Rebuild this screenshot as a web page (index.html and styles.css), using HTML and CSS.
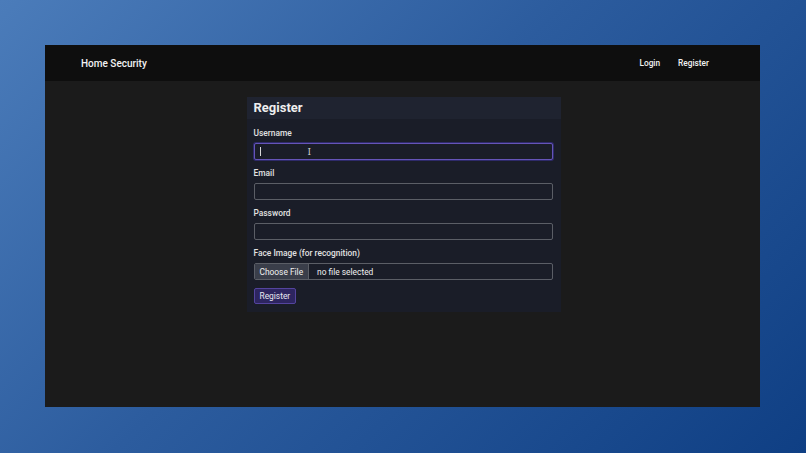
FILE: index.html
```html
<!DOCTYPE html>
<html lang="en">
<head>
  <meta charset="UTF-8" />
  <meta name="viewport" content="width=device-width, initial-scale=1.0"/>
  <title>Register - Home Security</title>
  <link rel="stylesheet" href="styles.css">
</head>
<body>
  <div class="window">
    <nav class="navbar">
      <a class="brand" href="#">Home Security</a>
      <div class="nav-links">
        <a href="#">Login</a>
        <a href="#">Register</a>
      </div>
    </nav>

    <main class="content">
      <div class="card">
        <div class="card-header">Register</div>
        <form class="card-body">
          <label for="username">Username</label>
          <div class="field focused"><span class="caret"></span><span class="ibeam">I</span></div>

          <label for="email">Email</label>
          <div class="field"></div>

          <label for="password">Password</label>
          <div class="field"></div>

          <label>Face Image (for recognition)</label>
          <div class="field file">
            <span class="file-btn">Choose File</span>
            <span class="file-name">no file selected</span>
          </div>

          <div class="actions">
            <button type="button">Register</button>
          </div>
        </form>
      </div>
    </main>
  </div>
</body>
</html>
```

FILE: styles.css
```css
* {
  box-sizing: border-box;
}
html, body {
  height: 100%;
}
body {
  margin: 0;
  padding: 45px 46px 46px 45px;
  font-family: Roboto, "Noto Sans", sans-serif;
  background: linear-gradient(135deg, #4b7cba 0%, #2c5c9e 45%, #0f3f84 100%);
}
.window {
  height: 100%;
  display: flex;
  flex-direction: column;
  background: #1b1b1b;
}
.navbar {
  height: 36px;
  background: #0e0e0e;
  display: flex;
  align-items: center;
  justify-content: space-between;
  padding: 0 51px 0 36px;
}
.navbar a {
  color: #f2f2f2;
  text-decoration: none;
}
.brand {
  font-size: 10px;
  font-weight: 500;
}
.nav-links {
  display: flex;
  gap: 18px;
  font-size: 8.3px;
  font-weight: 500;
}
.content {
  flex: 1;
  display: flex;
  justify-content: center;
  align-items: flex-start;
  padding-top: 16px;
}
.card {
  width: 314px;
  margin-left: 2px;
  background: #1a1d28;
}
.card-header {
  background: #1f2330;
  height: 22px;
  padding: 0 7px;
  line-height: 22px;
  font-size: 13px;
  font-weight: 700;
  color: #eeeeee;
}
.card-body {
  padding: 9px 8px 8px 7px;
  display: flex;
  flex-direction: column;
}
label {
  font-size: 8.4px;
  line-height: 10px;
  font-weight: 500;
  color: #e2e2e2;
  margin-bottom: 5px;
}
.field {
  height: 17px;
  border: 1px solid #5b5e66;
  border-radius: 2px;
  background: #1a1d28;
  margin-bottom: 8px;
  position: relative;
  display: flex;
  align-items: center;
}
.field.focused {
  border-color: #6554b8;
  box-shadow: 0 0 0 1px #2e2a6a;
}
.caret {
  width: 1px;
  height: 9px;
  background: #d8d8d8;
  margin-left: 5px;
}
.ibeam {
  position: absolute;
  left: 53px;
  top: 3px;
  font-family: "DejaVu Serif", serif;
  font-size: 9px;
  color: #cfcfcf;
}
.field.file {
  overflow: hidden;
  font-size: 8.4px;
  color: #f0f0f0;
}
.file-btn {
  height: 100%;
  display: flex;
  align-items: center;
  padding: 0 5px;
  background: #3a3e4a;
  border-right: 1px solid #5b5e66;
}
.file-name {
  padding-left: 8px;
}
.actions {
  display: flex;
}
button {
  height: 16px;
  padding: 0 5px;
  font-family: inherit;
  font-size: 8.4px;
  color: #e8e8f0;
  background: #2d2560;
  border: 1px solid #54449e;
  border-radius: 2px;
}
```
